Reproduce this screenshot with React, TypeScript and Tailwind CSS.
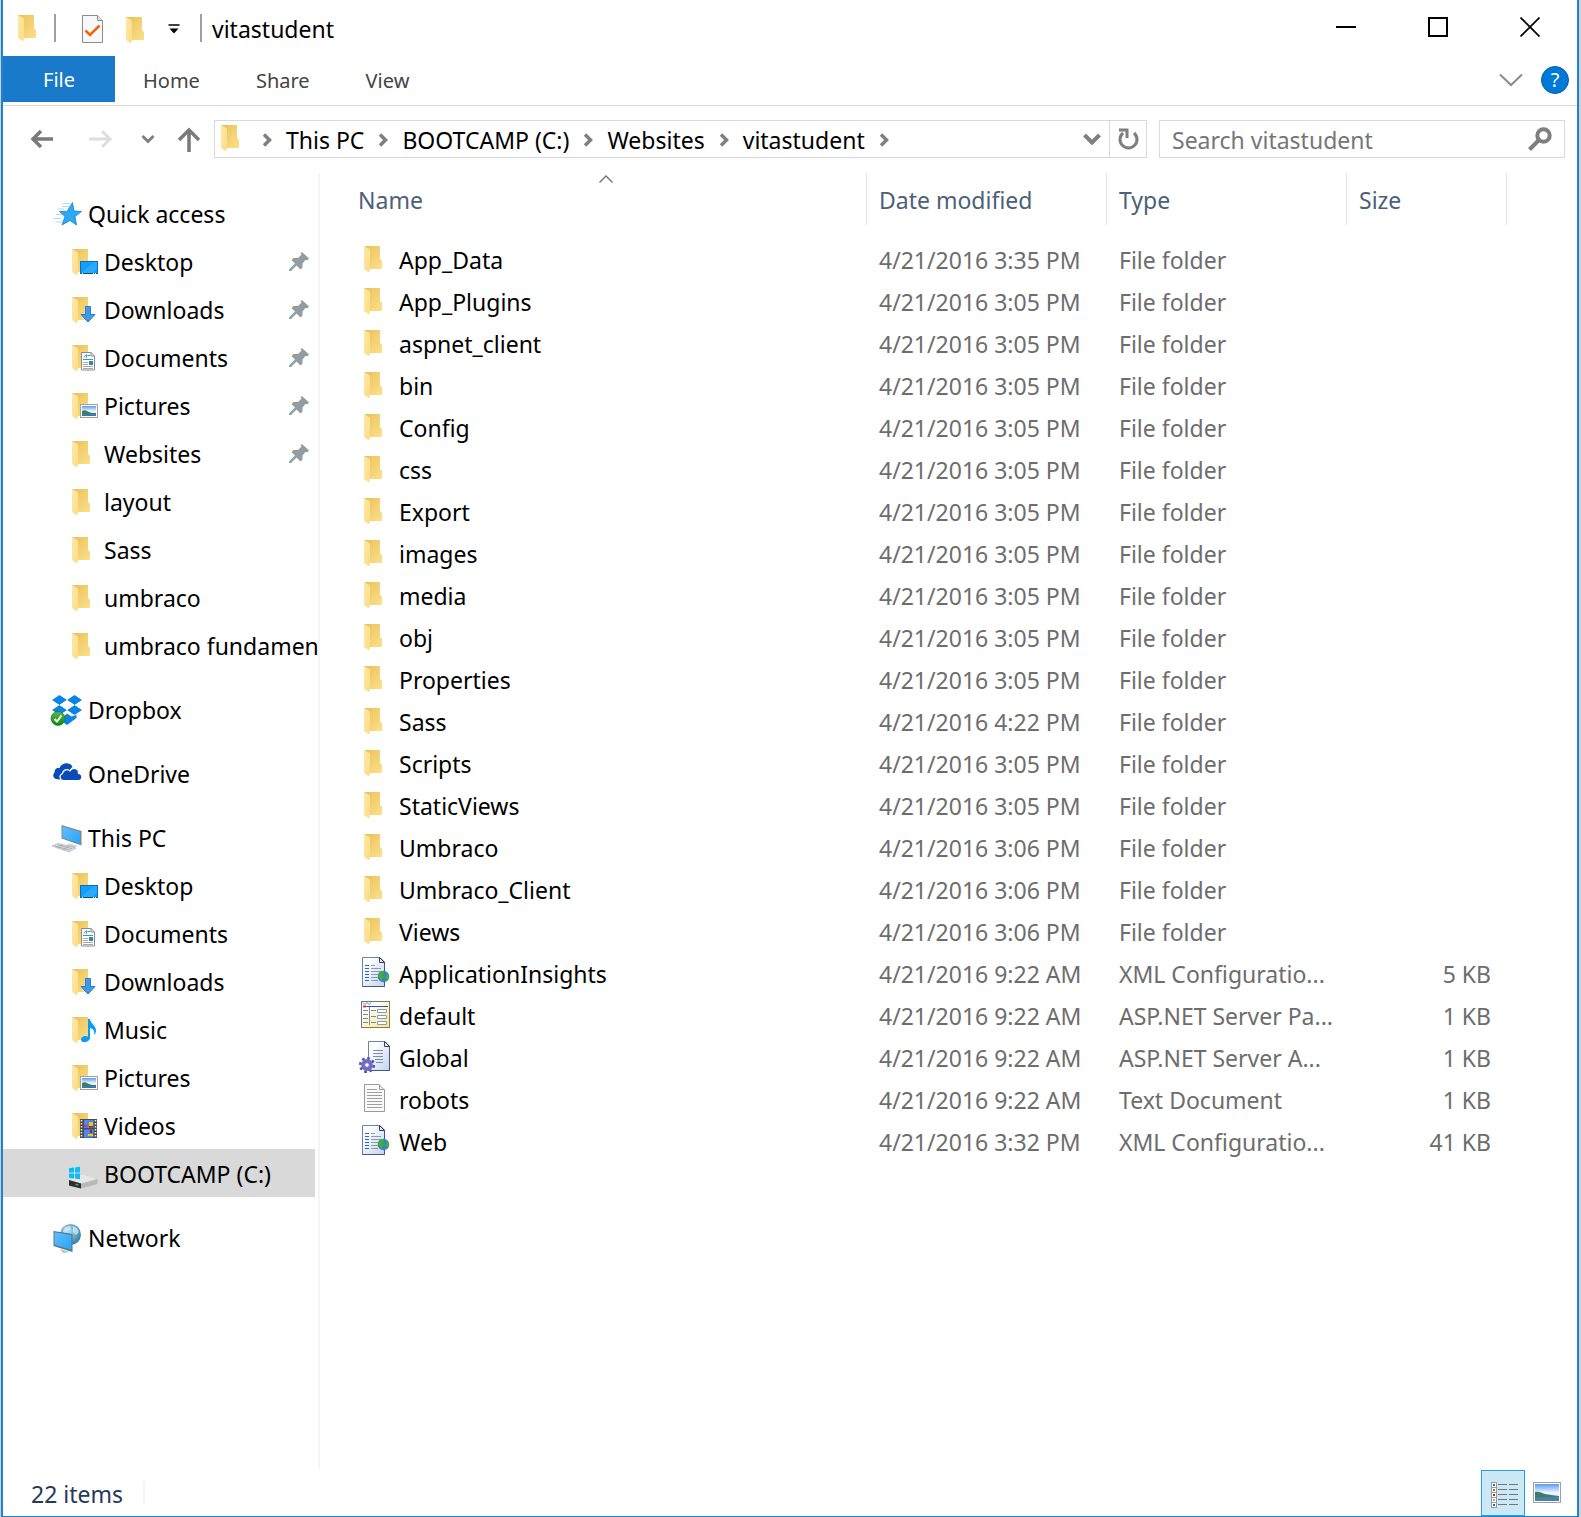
import type { ReactNode } from "react";

// ─── Types & data ─────────────────────────────────────────────────────────────

type IconName =
    | "folder"
    | "desktop"
    | "downloads"
    | "documents"
    | "pictures"
    | "music"
    | "videos"
    | "drive"
    | "star"
    | "dropbox"
    | "onedrive"
    | "pc"
    | "network"
    | "config"
    | "aspx"
    | "asax"
    | "text";

type NavItem = { label: string; icon: IconName; pinned?: boolean; selected?: boolean };
type NavGroup = NavItem & { children?: NavItem[] };
type FileRow = { name: string; date: string; type: string; size?: string; icon?: IconName };

const navGroups: NavGroup[] = [
    {
        label: "Quick access",
        icon: "star",
        children: [
            { label: "Desktop", icon: "desktop", pinned: true },
            { label: "Downloads", icon: "downloads", pinned: true },
            { label: "Documents", icon: "documents", pinned: true },
            { label: "Pictures", icon: "pictures", pinned: true },
            { label: "Websites", icon: "folder", pinned: true },
            { label: "layout", icon: "folder" },
            { label: "Sass", icon: "folder" },
            { label: "umbraco", icon: "folder" },
            { label: "umbraco fundamen", icon: "folder" },
        ],
    },
    { label: "Dropbox", icon: "dropbox" },
    { label: "OneDrive", icon: "onedrive" },
    {
        label: "This PC",
        icon: "pc",
        children: [
            { label: "Desktop", icon: "desktop" },
            { label: "Documents", icon: "documents" },
            { label: "Downloads", icon: "downloads" },
            { label: "Music", icon: "music" },
            { label: "Pictures", icon: "pictures" },
            { label: "Videos", icon: "videos" },
            { label: "BOOTCAMP (C:)", icon: "drive", selected: true },
        ],
    },
    { label: "Network", icon: "network" },
];

const files: FileRow[] = [
    { name: "App_Data", date: "4/21/2016 3:35 PM", type: "File folder" },
    { name: "App_Plugins", date: "4/21/2016 3:05 PM", type: "File folder" },
    { name: "aspnet_client", date: "4/21/2016 3:05 PM", type: "File folder" },
    { name: "bin", date: "4/21/2016 3:05 PM", type: "File folder" },
    { name: "Config", date: "4/21/2016 3:05 PM", type: "File folder" },
    { name: "css", date: "4/21/2016 3:05 PM", type: "File folder" },
    { name: "Export", date: "4/21/2016 3:05 PM", type: "File folder" },
    { name: "images", date: "4/21/2016 3:05 PM", type: "File folder" },
    { name: "media", date: "4/21/2016 3:05 PM", type: "File folder" },
    { name: "obj", date: "4/21/2016 3:05 PM", type: "File folder" },
    { name: "Properties", date: "4/21/2016 3:05 PM", type: "File folder" },
    { name: "Sass", date: "4/21/2016 4:22 PM", type: "File folder" },
    { name: "Scripts", date: "4/21/2016 3:05 PM", type: "File folder" },
    { name: "StaticViews", date: "4/21/2016 3:05 PM", type: "File folder" },
    { name: "Umbraco", date: "4/21/2016 3:06 PM", type: "File folder" },
    { name: "Umbraco_Client", date: "4/21/2016 3:06 PM", type: "File folder" },
    { name: "Views", date: "4/21/2016 3:06 PM", type: "File folder" },
    { name: "ApplicationInsights", date: "4/21/2016 9:22 AM", type: "XML Configuratio...", size: "5 KB", icon: "config" },
    { name: "default", date: "4/21/2016 9:22 AM", type: "ASP.NET Server Pa...", size: "1 KB", icon: "aspx" },
    { name: "Global", date: "4/21/2016 9:22 AM", type: "ASP.NET Server A...", size: "1 KB", icon: "asax" },
    { name: "robots", date: "4/21/2016 9:22 AM", type: "Text Document", size: "1 KB", icon: "text" },
    { name: "Web", date: "4/21/2016 3:32 PM", type: "XML Configuratio...", size: "41 KB", icon: "config" },
];

const crumbs = ["This PC", "BOOTCAMP (C:)", "Websites", "vitastudent"];

// ─── Icons ────────────────────────────────────────────────────────────────────

function Gradients() {
    return (
        <svg className="absolute size-0" aria-hidden="true">
            <defs>
                <linearGradient id="folderBack" x1="0" y1="0" x2="1" y2="1">
                    <stop offset="0" stopColor="#e9c058" />
                    <stop offset="1" stopColor="#fde08b" />
                </linearGradient>
                <linearGradient id="folderFront" x1="0" y1="0" x2="1" y2="1">
                    <stop offset="0" stopColor="#ffe9a8" />
                    <stop offset="1" stopColor="#fbdc86" />
                </linearGradient>
                <linearGradient id="sky" x1="0" y1="0" x2="0" y2="1">
                    <stop offset="0" stopColor="#5a9bf0" />
                    <stop offset="0.5" stopColor="#e8f4ff" />
                </linearGradient>
                <linearGradient id="screen" x1="0" y1="0" x2="1" y2="1">
                    <stop offset="0" stopColor="#5cc0ff" />
                    <stop offset="1" stopColor="#2ba3f5" />
                </linearGradient>
                <linearGradient id="page" x1="0" y1="0" x2="1" y2="1">
                    <stop offset="0.2" stopColor="#ffffff" />
                    <stop offset="1" stopColor="#c3d3f1" />
                </linearGradient>
                <linearGradient id="form" x1="0" y1="0" x2="1" y2="1">
                    <stop offset="0.2" stopColor="#ffffff" />
                    <stop offset="1" stopColor="#fbe48c" />
                </linearGradient>
                <radialGradient id="globe" cx="0.4" cy="0.35" r="0.7">
                    <stop offset="0" stopColor="#b5e0f2" />
                    <stop offset="1" stopColor="#2d7ba3" />
                </radialGradient>
                <linearGradient id="check" x1="0" y1="0" x2="0" y2="1">
                    <stop offset="0" stopColor="#5cb84f" />
                    <stop offset="1" stopColor="#0b8a12" />
                </linearGradient>
            </defs>
        </svg>
    );
}

const folderShape = (
    <>
        <path d="M6 3h16v13l2 2v8H6z" fill="url(#folderBack)" />
        <path d="M6 3l6 3.5v20l-1 3L6 26z" fill="url(#folderFront)" />
    </>
);

const landscape = (
    <>
        <rect x="14.5" y="14.5" width="17" height="13" fill="#fff" stroke="#a0a0a0" />
        <rect x="16" y="16" width="14" height="10" fill="url(#sky)" />
        <path d="M16 21c3-2 5 0 7 1s4 1 7 1v3H16z" fill="#3f7d5e" />
        <path d="M16 24.5l14-1V26H16z" fill="#3b78ad" />
    </>
);

const iconShapes: Record<IconName, ReactNode> = {
    folder: folderShape,
    desktop: (
        <>
            {folderShape}
            <rect x="14.5" y="15.5" width="17" height="12" fill="#12a0ff" stroke="#0b6fb8" />
            <path d="M15 27l13-11h3v7l-5 4z" fill="#35b0ff" opacity="0.6" />
            <path d="M15 27.5h16" stroke="#0d4f8a" />
            <path d="M16 27.5h1M27 27.5h1M29 27.5h1" stroke="#fff" />
        </>
    ),
    downloads: (
        <>
            {folderShape}
            <path d="M19.5 12.5h5v8h4.500L22 28l-7-7.500h4.500z" fill="#3d9be9" stroke="#2a7fcc" />
        </>
    ),
    documents: (
        <>
            {folderShape}
            <path d="M15.5 10.5H25l3.5 3.5v14h-13z" fill="#fff" stroke="#8a8a8a" />
            <path d="M25 10.5V14h3.5" fill="none" stroke="#8a8a8a" />
            <path d="M18 15.5l2.5-3v3M21.5 13.5h3M17 17.5h10" fill="none" stroke="#2a9ad6" />
            <path d="M17 20.5h5M17 22.5h5M17 24.5h10M17 26.5h10" stroke="#a8a8a8" />
            <rect x="23" y="19" width="4" height="4" fill="#3d7fb8" />
        </>
    ),
    pictures: (
        <>
            {folderShape}
            {landscape}
        </>
    ),
    music: (
        <>
            {folderShape}
            <path
                d="M22 5h2c0 4 6.500 7 6 12-0.200 2-1 3-2 4 1-5-1-6-4-7v9.500c0 5-9 6.500-9 2 0-3 4-4.500 7-3z"
                fill="#0a9bf5"
            />
        </>
    ),
    videos: (
        <>
            {folderShape}
            <rect x="14" y="9" width="17" height="19" fill="#4a4a4a" />
            <rect x="18" y="10" width="9.5" height="8" fill="#4a8af0" />
            <rect x="18" y="19.5" width="9.5" height="8" fill="#4a8af0" />
            <path d="M15.5 10v18M29.5 10v18" stroke="#e6e6e6" strokeWidth="1.6" strokeDasharray="1.6 1.4" />
            <path d="M23 12h4v4h-4zM22 24h5v2h-5z" fill="#f0c419" />
            <path d="M18 15h4v2h-4z" fill="#e0347a" />
            <path d="M23 16h4v1.5h-4zM24 20h2v3h-2z" fill="#a32020" />
        </>
    ),
    drive: (
        <>
            <path d="M3 22l13-6 15.5 5v5L15 30.5 3 28z" fill="#b9b9b9" />
            <path d="M3 22l13-6 15.5 5L15 25.5z" fill="#e6e6e6" />
            <path d="M3 22l12 3.5v5L3 27.5z" fill="#2c2c2c" />
            <path d="M9.5 26.3l3 .8" stroke="#4caf50" strokeWidth="1.5" />
            <path
                d="M3 10.2l5-.7v5H3zM9 9.400l5-.7v5.800H9zM3 15.500h5v5l-5-.7zM9 15.500h5v5.700l-5-.6z"
                fill="#0dbcf5"
            />
        </>
    ),
    star: (
        <>
            <path d="M12 5.5h7M11 8.5h7M7 11h6M5 16.500h6M3 20.500h7M5 24h6" stroke="#a8d9f7" strokeWidth="1.2" />
            <path
                d="M21.5 4.500l1.500 8.500 7.500 0.500-6.500 5 1.500 8.500-6.500-4.500-8 4.500 3-8.500-5.500-5h7.500z"
                fill="#2ea8f5"
                stroke="#1482cf"
                strokeWidth="0.8"
            />
        </>
    ),
    dropbox: (
        <>
            <path
                d="M8.500 1L16 6l-7.500 5L1 6zM23.500 1L31 6l-7.500 5L16 6zM8.500 11L16 16l-7.500 5L1 16zM23.500 11L31 16l-7.500 5L16 16zM16 19.500l4.500 3 5-1.500v3L16 31l-7-5z"
                fill="#0a84e8"
            />
            <path d="M16 6l7.500 5L16 16l-7.500-5z" fill="#fff" />
            <circle cx="7" cy="24.5" r="7" fill="url(#check)" stroke="#0a7a10" strokeWidth="0.6" />
            <path d="M3.5 25L6 27.500l4.500-6" fill="none" stroke="#fff" strokeWidth="2" />
        </>
    ),
    onedrive: (
        <>
            <path
                d="M7.500 21.500C3 21.500.5 18 3.500 14.500c0-4 2.500-5 5-4.500 2-5.500 10-6.500 13-1.500l-3 4-8 9z"
                fill="#0a4bb8"
            />
            <path
                d="M13 22.500c-4.500 0-5.500-5-1.500-7 .5-4 5.500-5 7.500-2.500 3-4.500 9-2.500 8.500 2.500 4.500.5 4.500 6.500.5 7z"
                fill="#0a4bb8"
                stroke="#fff"
                strokeWidth="1.2"
            />
        </>
    ),
    pc: (
        <>
            <path d="M10.500 3l20 6v14.500l-20-7z" fill="#7d888f" />
            <path d="M11.500 4.500l17.500 5.500v12l-17.500-6.300z" fill="url(#screen)" />
            <path d="M18 21.500l9 2.500-5 2-7-2.500z" fill="#c9cfd3" />
            <path d="M1 24l6-2.500 18 4.500-7 4z" fill="#d7dadc" stroke="#aeb4b8" strokeWidth="0.7" />
            <path d="M4 24l14 4M7 22.800l14 4M6 26l6-3M12 27.500l6-3" stroke="#9aa1a6" strokeWidth="0.7" />
        </>
    ),
    network: (
        <>
            <circle cx="19.5" cy="12.500" r="10.500" fill="url(#globe)" />
            <path d="M14 5l5-1 1 3-4 2-2 3-2-3zM22 4l4 2 2 4-3 3-3-3z" fill="#d3eefa" opacity="0.7" />
            <path d="M2.500 9l19 3v18l-19-6z" fill="#5d7482" />
            <path d="M3.500 10.300l17 2.700v15l-17-5.300z" fill="url(#screen)" />
            <path d="M9 27l8 2.500 2 0.500-7 1z" fill="#b9c2c8" />
        </>
    ),
    config: (
        <>
            <path d="M4.500.5H22L26.500 5v24.500h-22z" fill="url(#page)" stroke="#6a83b0" />
            <path d="M26.500 5v24.500h-22" fill="none" stroke="#44587f" />
            <path d="M21.500.5v5h5z" fill="#e8eefa" stroke="#33435f" />
            <path d="M7 8.500h4M7 11.500h4M7 14.500h4M7 17.500h4M7 20.500h4M7 23.500h4" stroke="#2b63d9" />
            <path d="M13 8.500h4M13 11.500h10M13 14.500h10M13 17.500h8M13 20.500h7M13 23.500h7" stroke="#8d99ad" />
            <circle cx="25.500" cy="19.500" r="5.800" fill="#3b7fd4" />
            <path
                d="M20.500 16.500c2-3 4-3 5.500-2l-1 3 1 2-2 4-2-2-2-1zM28 16l3 2v3l-2 3-2-3z"
                fill="#3fae3a"
            />
        </>
    ),
    aspx: (
        <>
            <rect x="3.500" y="2.500" width="28" height="26" fill="url(#form)" stroke="#64778f" />
            <path d="M31.500 3v25.500H4" fill="none" stroke="#8f7d3a" />
            <path d="M5 3.500l2 2 2-2 2 2 2-2" fill="none" stroke="#6c7f9c" />
            <path d="M5 7.500h25" stroke="#2456c7" />
            <path d="M5 7.500h3" stroke="#e0442a" strokeWidth="2" />
            <path
                d="M11.500 8v18M5 11.500h5M5 15.500h5M5 19.500h5M5 23.500h5M13 11.500h5M13 17.500h5M13 23.500h5"
                stroke="#7d8894"
            />
            <path
                d="M19.500 10.500h9v3h-9zM19.500 16.500h9v3h-9zM19.500 22.500h9v3h-9z"
                fill="#fff"
                stroke="#7f9cc9"
            />
        </>
    ),
    asax: (
        <>
            <path d="M10.500.5H27L31.500 5v24.500h-21z" fill="url(#page)" stroke="#6a83b0" />
            <path d="M31.500 5v24.500h-21" fill="none" stroke="#44587f" />
            <path d="M26.500.5v5h5z" fill="#e8eefa" stroke="#33435f" />
            <path d="M15 9.500h10M15 12.500h10M15 15.500h10M17 18.500h8M18 21.500h7" stroke="#7f8ca3" />
            <circle cx="9" cy="24" r="6.800" fill="none" stroke="#5450a8" strokeWidth="2.500" strokeDasharray="2.700 2.640" />
            <circle cx="9" cy="24" r="4.200" fill="#dcdcf5" stroke="#6f6bcc" strokeWidth="3.400" />
            <circle cx="9" cy="24" r="2.300" fill="#fff" stroke="#4a468f" strokeWidth="0.7" />
        </>
    ),
    text: (
        <>
            <path d="M6.500 1.500H21L26.500 7v21.500h-20z" fill="#fafafa" stroke="#9a9a9a" />
            <path d="M21.500 1.500v5h5" fill="none" stroke="#9a9a9a" />
            <path
                d="M9 6.500h10M9 9.500h15M9 12.500h15M9 15.500h15M9 18.500h15M9 21.500h15M9 24.500h15"
                stroke="#9e9e9e"
            />
        </>
    ),
};

function Icon({ name }: { name: IconName }) {
    return (
        <svg viewBox="0 0 32 32" className="size-8 shrink-0 overflow-visible" aria-hidden="true">
            {iconShapes[name]}
        </svg>
    );
}

function PinIcon() {
    return (
        <svg viewBox="0 0 20 20" className="size-5 shrink-0" aria-hidden="true">
            <path
                d="M13 0l7 6.500-1.500 1.500h-2l-3 3.500v4l-2 2-4-4L2 19H0v-1.500l6-6L2.500 8l2-2h4.500l3.500-3.500-1-1z"
                fill="#919ca3"
            />
        </svg>
    );
}

function CrumbChevron() {
    return (
        <svg viewBox="0 0 10 14" className="h-3.5 w-2.5 shrink-0" aria-hidden="true">
            <path d="M2 1.500L7.500 7 2 12.500" fill="none" stroke="#7f7f7f" strokeWidth="3.500" />
        </svg>
    );
}

// ─── Title bar ────────────────────────────────────────────────────────────────

function TitleBar() {
    return (
        <header className="flex h-14 items-center">
            <div className="flex flex-1 items-center pl-[9px]">
                <Icon name="folder" />
                <span className="ml-2.5 h-7 w-0.5 bg-[#a0a0a0]" />
                <button aria-label="Properties" className="ml-6 p-0.5 pt-1">
                    <svg viewBox="0 0 22 28" className="h-7 w-[22px]" aria-hidden="true">
                        <path d="M.5.5h15l5 5v22H.5z" fill="#f7f8fa" stroke="#8b8b8b" />
                        <path d="M15.500.5v5h5" fill="#e1e3e6" stroke="#8b8b8b" />
                        <path d="M3.500 15.500L8 20l9.500-9.500" fill="none" stroke="#f7630c" strokeWidth="2.500" />
                    </svg>
                </button>
                <button aria-label="New folder" className="ml-3.5 pt-1">
                    <Icon name="folder" />
                </button>
                <button aria-label="Customize Quick Access Toolbar" className="ml-3.5 p-0.5 pt-1">
                    <svg viewBox="0 0 12 10" className="h-2.5 w-3" aria-hidden="true">
                        <path d="M.5 1h11" stroke="#000" strokeWidth="1.5" />
                        <path d="M1.500 4.500h9L6 9.500z" fill="#000" />
                    </svg>
                </button>
                <span className="ml-[18px] h-7 w-0.5 bg-[#a0a0a0]" />
                <h1 className="ml-2.5 pt-px text-[23px] leading-8">vitastudent</h1>
            </div>
            <div className="flex h-full pr-px pb-0.5">
                <button aria-label="Minimize" className="flex w-[92px] items-center justify-center">
                    <svg viewBox="0 0 20 20" className="size-5" aria-hidden="true">
                        <path d="M0 10h20" stroke="#000" strokeWidth="2" />
                    </svg>
                </button>
                <button aria-label="Maximize" className="flex w-[92px] items-center justify-center">
                    <svg viewBox="0 0 20 20" className="size-5" aria-hidden="true">
                        <rect x="1" y="1" width="18" height="18" fill="none" stroke="#000" strokeWidth="2" />
                    </svg>
                </button>
                <button aria-label="Close" className="flex w-[92px] items-center justify-center">
                    <svg viewBox="0 0 20 20" className="size-5" aria-hidden="true">
                        <path d="M.5.5l19 19M19.500.5l-19 19" stroke="#000" strokeWidth="1.700" />
                    </svg>
                </button>
            </div>
        </header>
    );
}

// ─── Ribbon tabs ──────────────────────────────────────────────────────────────

function Ribbon() {
    return (
        <div className="flex h-[50px] items-start border-b border-[#dadbdc] text-xl leading-8 text-[#444]">
            <button className="h-[46px] w-28 bg-[#1979ca] pt-0.5 text-white">File</button>
            <button className="ml-7 h-[50px]">Home</button>
            <button className="ml-14 h-[50px]">Share</button>
            <button className="ml-14 h-[50px]">View</button>
            <div className="ml-auto flex h-12 items-center gap-[18px] pr-2">
                <button aria-label="Expand the Ribbon">
                    <svg viewBox="0 0 24 14" className="h-3.5 w-6" aria-hidden="true">
                        <path d="M1 1.500L12 12 23 1.500" fill="none" stroke="#8c8c8c" strokeWidth="2" />
                    </svg>
                </button>
                <button
                    aria-label="Help"
                    className="flex size-7 items-center justify-center rounded-full border border-[#0a5ca8] bg-[#0078d7] text-xl leading-6 text-white"
                >
                    ?
                </button>
            </div>
        </div>
    );
}

// ─── Address bar ──────────────────────────────────────────────────────────────

function AddressBar() {
    return (
        <div className="flex items-center pt-3.5 pr-3 pb-[15px] pl-[27px]">
            <button aria-label="Back">
                <svg viewBox="0 0 24 20" className="h-5 w-6" aria-hidden="true">
                    <path d="M2 10h21M11 2l-8 8 8 8" fill="none" stroke="#7a7a7a" strokeWidth="3.500" />
                </svg>
            </button>
            <button aria-label="Forward" className="ml-[35px]">
                <svg viewBox="0 0 24 20" className="h-5 w-6" aria-hidden="true">
                    <path d="M0 10h21M13 2l8 8-8 8" fill="none" stroke="#dedede" strokeWidth="3" />
                </svg>
            </button>
            <button aria-label="Recent locations" className="ml-7">
                <svg viewBox="0 0 14 10" className="h-2.5 w-3.5" aria-hidden="true">
                    <path d="M1.500 2L7 7.500 12.500 2" fill="none" stroke="#7f7f7f" strokeWidth="3" />
                </svg>
            </button>
            <button aria-label="Up" className="ml-[22px]">
                <svg viewBox="0 0 24 26" className="h-[26px] w-6" aria-hidden="true">
                    <path d="M12 26V4M2 14L12 4l10 10" fill="none" stroke="#7a7a7a" strokeWidth="3.500" />
                </svg>
            </button>

            <div className="ml-[13px] flex h-[38px] flex-1 items-center border border-[#d9d9d9] text-[23px] leading-8">
                <span className="pb-0.5">
                    <Icon name="folder" />
                </span>
                <nav aria-label="Address" className="flex flex-1 items-center gap-3.5 pt-px pl-[15px]">
                    <CrumbChevron />
                    {crumbs.map((crumb) => (
                        <span key={crumb} className="flex items-center gap-3.5">
                            <a href="#" className="whitespace-nowrap">{crumb}</a>
                            <CrumbChevron />
                        </span>
                    ))}
                </nav>
                <button aria-label="Previous locations" className="px-2">
                    <svg viewBox="0 0 18 12" className="h-3 w-[18px]" aria-hidden="true">
                        <path d="M1.500 2L9 9.500 16.500 2" fill="none" stroke="#7f7f7f" strokeWidth="4" />
                    </svg>
                </button>
                <button
                    aria-label="Refresh"
                    className="flex h-full w-[37px] items-center justify-center border-l border-[#d9d9d9]"
                >
                    <svg viewBox="0 0 22 22" className="size-[22px]" aria-hidden="true">
                        <path d="M17 5a8.500 8.500 0 1 1-11 0" fill="none" stroke="#7f7f7f" strokeWidth="3" />
                        <path d="M2 2h8v8" fill="none" stroke="#7f7f7f" strokeWidth="3" />
                    </svg>
                </button>
            </div>

            <label className="ml-3 flex h-[38px] w-[406px] items-center border border-[#d9d9d9] px-3">
                <input
                    type="text"
                    aria-label="Search vitastudent"
                    placeholder="Search vitastudent"
                    className="min-w-0 flex-1 pt-0.5 text-[23px] leading-8 outline-none placeholder:text-[#767676]"
                />
                <svg viewBox="0 0 24 24" className="size-6" aria-hidden="true">
                    <circle cx="15.500" cy="8.500" r="6.200" fill="none" stroke="#7f7f7f" strokeWidth="4" />
                    <path d="M11 13l-9.500 9.500" stroke="#7f7f7f" strokeWidth="4" />
                </svg>
            </label>
        </div>
    );
}

// ─── Navigation pane ──────────────────────────────────────────────────────────

function Sidebar() {
    return (
        <nav
            aria-label="Folders"
            className="flex w-[317px] shrink-0 flex-col gap-4 border-r-2 border-[#f5f5f5] pt-4 pr-[3px] text-[23px] leading-8"
        >
            {navGroups.map((group) => (
                <div key={group.label}>
                    <a href="#" className="flex h-12 items-center gap-[5px] pt-0.5 pl-12">
                        <Icon name={group.icon} />
                        {group.label}
                    </a>
                    {group.children?.map((item) => (
                        <a
                            key={item.label}
                            href="#"
                            className={`flex h-12 items-center gap-1.5 pt-0.5 pl-[63px] whitespace-nowrap ${item.selected ? "bg-[#d9d9d9]" : ""}`}
                        >
                            <Icon name={item.icon} />
                            {item.label}
                            {item.pinned && (
                                <span className="ml-auto pr-1.5">
                                    <PinIcon />
                                </span>
                            )}
                        </a>
                    ))}
                </div>
            ))}
        </nav>
    );
}

// ─── File list ────────────────────────────────────────────────────────────────

function HeaderCell({ label, sorted }: { label: string; sorted?: boolean }) {
    return (
        <th
            scope="col"
            className="h-[67px] p-0 text-left align-top font-normal"
            aria-sort={sorted ? "ascending" : undefined}
        >
            <div className="flex h-[52px] flex-col border-r border-[#e5e5e5] pl-3">
                <span className="flex h-[11px] items-center justify-center pr-3">
                    {sorted && (
                        <svg viewBox="0 0 14 8" className="h-2 w-3.5" aria-hidden="true">
                            <path d="M.5 7.500L7 1l6.500 6.500" fill="none" stroke="#6d6d6d" strokeWidth="1.300" />
                        </svg>
                    )}
                </span>
                <button className="self-start">{label}</button>
            </div>
        </th>
    );
}

function FileList() {
    return (
        <main className="min-w-0 flex-1 pl-[26px]">
            <table className="w-full table-fixed border-collapse text-[23px] leading-8">
                <colgroup>
                    <col className="w-[521px]" />
                    <col className="w-60" />
                    <col className="w-60" />
                    <col className="w-40" />
                    <col />
                </colgroup>
                <thead className="text-[#4c607a]">
                    <tr>
                        <HeaderCell label="Name" sorted />
                        <HeaderCell label="Date modified" />
                        <HeaderCell label="Type" />
                        <HeaderCell label="Size" />
                        <td />
                    </tr>
                </thead>
                <tbody className="whitespace-nowrap text-[#6d6d6d]">
                    {files.map((file) => (
                        <tr key={file.name} className="h-[42px]">
                            <td className="p-0 pl-3 text-black">
                                <div className="flex h-[42px] items-center gap-[9px] pb-1">
                                    <Icon name={file.icon ?? "folder"} />
                                    <span className="pt-0.5">{file.name}</span>
                                </div>
                            </td>
                            <td className="p-0 pb-0.5 pl-3">{file.date}</td>
                            <td className="p-0 pb-0.5 pl-3">{file.type}</td>
                            <td className="p-0 pr-4 pb-0.5 text-right">{file.size}</td>
                            <td />
                        </tr>
                    ))}
                </tbody>
            </table>
        </main>
    );
}

// ─── Status bar ───────────────────────────────────────────────────────────────

function StatusBar() {
    return (
        <footer className="flex h-[47px] items-center pl-7 text-[23px] leading-8 text-[#26395b]">
            <span className="pt-0.5">22 items</span>
            <span className="ml-5 h-6 w-0.5 bg-[#f5f5f5]" />
            <button
                aria-label="Details view"
                aria-pressed="true"
                className="ml-auto flex h-[46px] w-11 items-center justify-center self-end border border-[#26a0da] bg-[#cbe8f6] pt-1 pl-0.5"
            >
                <svg viewBox="0 0 28 28" className="size-7" aria-hidden="true">
                    <rect x="1.500" y="1.500" width="5" height="25" fill="#fff" stroke="#9a9a9a" />
                    <path d="M1 6.500h6M1 11.500h6M1 16.500h6M1 21.500h6" stroke="#9a9a9a" />
                    <path d="M3 4h2M3 24h2" stroke="#2f6ba5" strokeWidth="2" />
                    <path d="M3 9h2" stroke="#8a7a30" strokeWidth="2" />
                    <path d="M3 14h2" stroke="#b8281e" strokeWidth="2" />
                    <path d="M3 19h2" stroke="#8fb090" strokeWidth="2" />
                    <path
                        d="M8 3.500h9M19 3.500h9M8 8.500h9M19 8.500h9M8 13.500h9M19 13.500h9M8 18.500h9M19 18.500h9M8 23.500h9M19 23.500h9"
                        stroke="#757575"
                    />
                </svg>
            </button>
            <button aria-label="Large thumbnails view" className="mr-4 ml-2">
                <svg viewBox="0 0 28 22" className="h-[22px] w-7" aria-hidden="true">
                    <rect x=".5" y=".5" width="27" height="20" fill="#fff" stroke="#a0a0a0" />
                    <rect x="2" y="2" width="24" height="17" fill="url(#sky)" />
                    <path d="M2 10c4-1 6 1 10 2s8 1 14 2v2H2z" fill="#3f7d5e" />
                    <path d="M2 15.500l24-1V19H2z" fill="#4a7fae" />
                </svg>
            </button>
        </footer>
    );
}

// ─── Window ───────────────────────────────────────────────────────────────────

export default function App() {
    return (
        <div className="flex min-h-screen bg-[#cfcfcf] pr-0.5 pl-px font-['Noto_Sans',sans-serif] text-black">
            <Gradients />
            <div className="flex min-w-0 flex-1 flex-col border-x-2 border-b border-[#1883d7] bg-white">
                <TitleBar />
                <Ribbon />
                <AddressBar />
                <div className="flex flex-1">
                    <Sidebar />
                    <FileList />
                </div>
                <StatusBar />
            </div>
        </div>
    );
}
